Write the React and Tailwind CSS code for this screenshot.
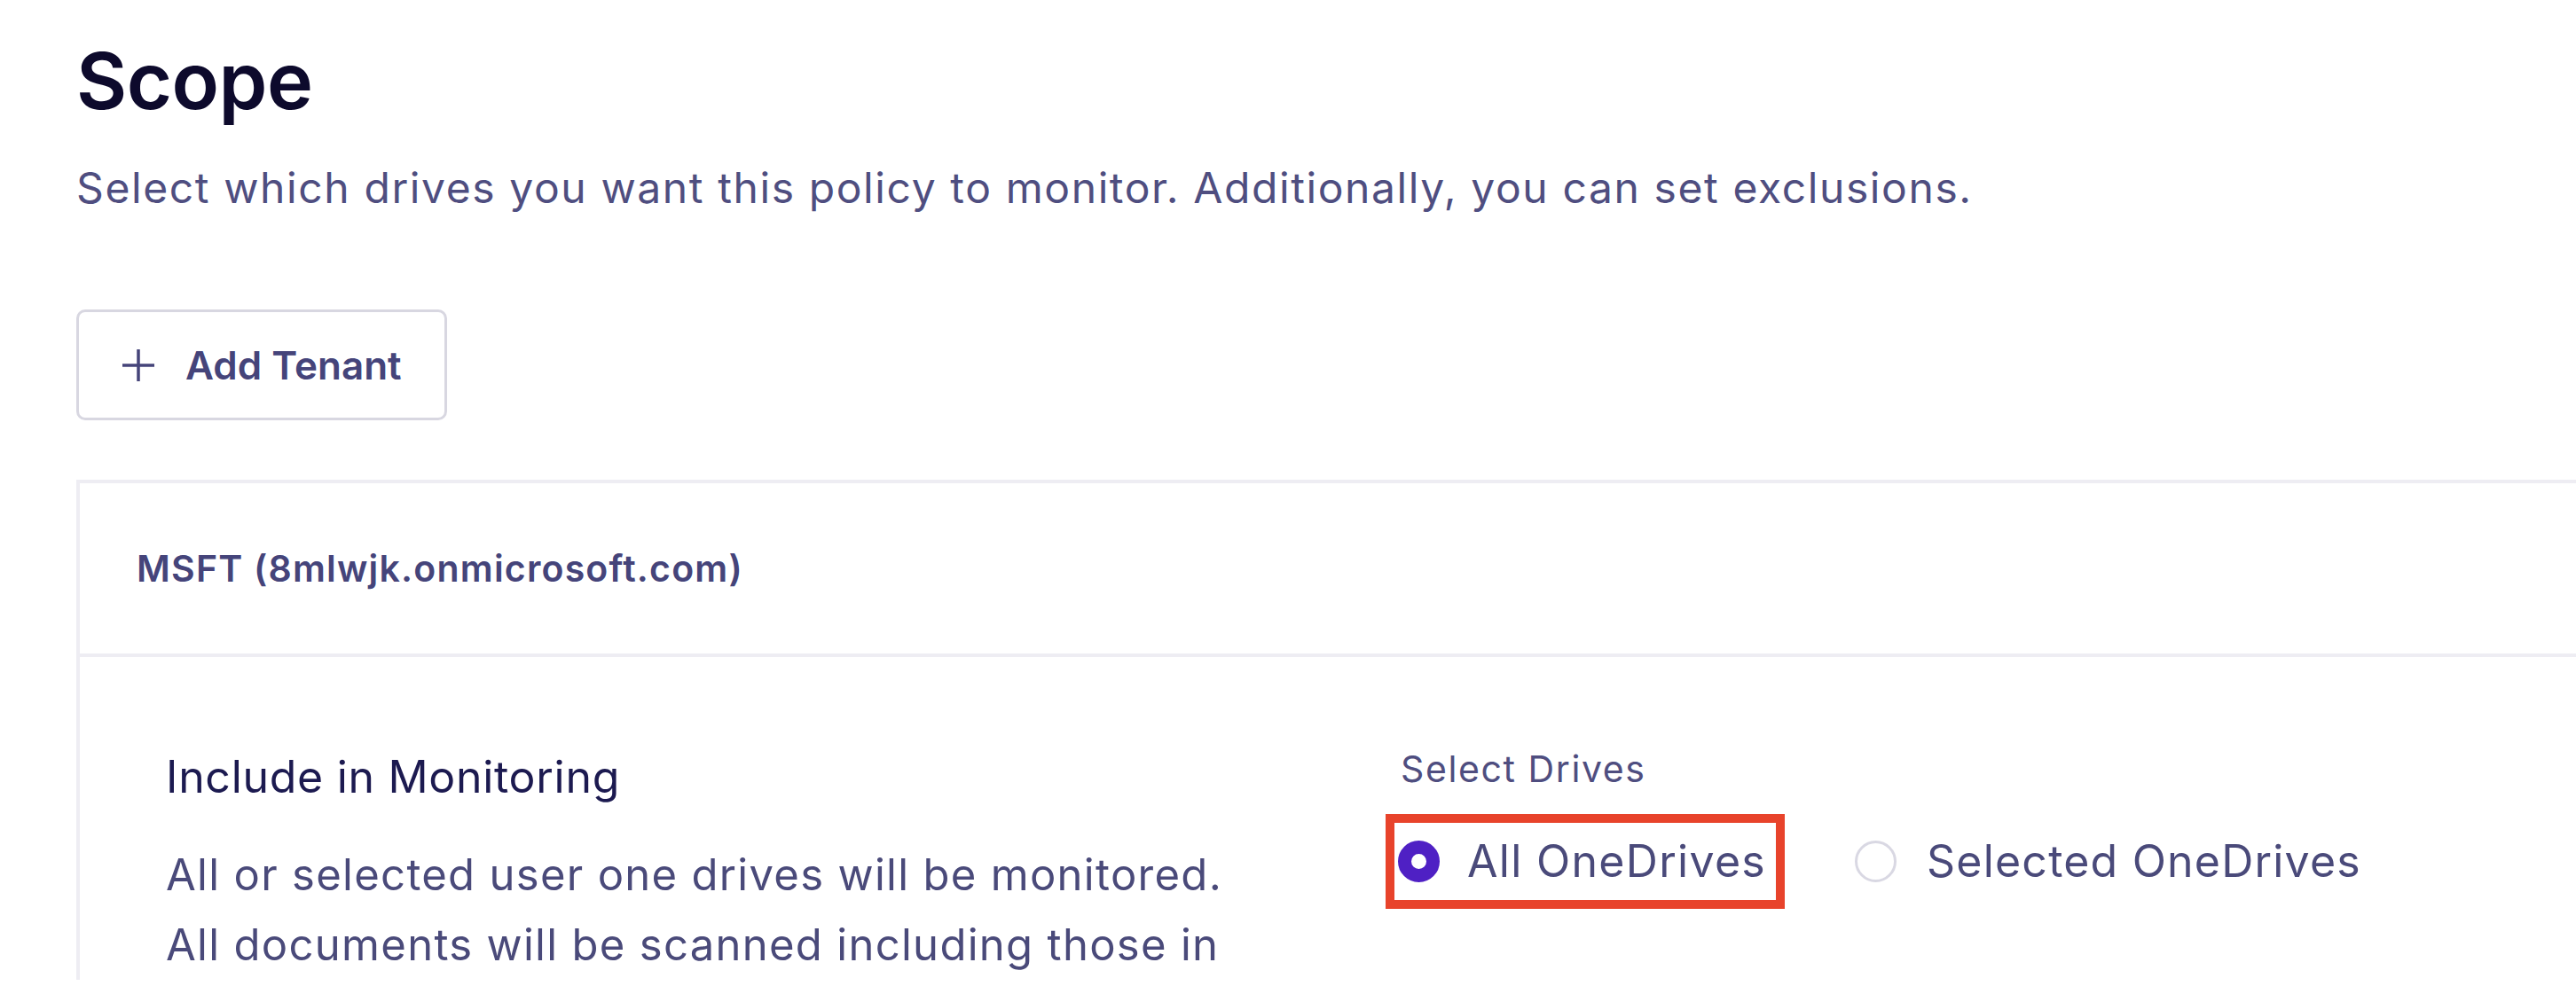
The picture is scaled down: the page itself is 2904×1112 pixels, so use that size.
import React from "react";

function Radio({ checked }) {
  if (checked) {
    return (
      <span className="box-border block h-[47px] w-[47px] shrink-0 rounded-full border-[15px] border-[#4f20c4] bg-white" />
    );
  }
  return (
    <span className="box-border block h-[47px] w-[47px] shrink-0 rounded-full border-[3px] border-[#d9d8e3] bg-white" />
  );
}

export default function App() {
  return (
    <div
      className="h-[1112px] w-full overflow-hidden bg-white pl-[86px] pt-[47px]"
      style={{ fontFamily: "Inter, 'Noto Sans', sans-serif" }}
    >
      <h1 className="text-[88px] font-semibold leading-[88px] tracking-[-0.5px] text-[#0d0a2c]">
        Scope
      </h1>
      <p className="mt-[47px] text-[48px] leading-[60px] tracking-[1.6px] text-[#4f4e80]">
        Select which drives you want this policy to monitor. Additionally, you can set exclusions.
      </p>

      <button className="mt-[107px] box-border flex h-[125px] w-[418px] items-center rounded-[10px] border-[3px] border-[#d8d7e1] bg-white pl-[48px]">
        <svg width="38" height="38" viewBox="0 0 38 38" className="shrink-0">
          <path d="M19 1V37M1 19H37" stroke="#45447a" strokeWidth="3.5" fill="none" />
        </svg>
        <span className="ml-[34px] text-[44px] font-semibold leading-[44px] text-[#45447a]">
          Add Tenant
        </span>
      </button>

      <div className="mt-[67px] border-l-[4px] border-t-[4px] border-[#eeedf3]">
        <div className="flex h-[192px] items-center pl-[64px]">
          <span className="text-[41px] font-semibold leading-[50px] tracking-[1.2px] text-[#45447a]">
            MSFT (8mlwjk.onmicrosoft.com)
          </span>
        </div>
        <div className="h-[4px] bg-[#eeedf3]" />
        <div className="flex items-start pl-[97px] pt-[96px]">
          <div className="w-[1392px] shrink-0 pt-[9px]">
            <div className="text-[50px] leading-[60px] tracking-[0.7px] text-[#1c1a50]">
              Include in Monitoring
            </div>
            <p className="mt-[41px] text-[49px] leading-[79px] tracking-[1.3px] text-[#4a4a7a]">
              All or selected user one drives will be monitored.
              <br />
              All documents will be scanned including those in
            </p>
          </div>
          <div className="flex flex-col">
            <div className="text-[41px] leading-[60px] tracking-[1.6px] text-[#4f4e80]">Select Drives</div>
            <div className="-ml-[3px] mt-[44px] flex h-[60px] items-center">
              <label className="relative flex items-center">
                <Radio checked />
                <span className="ml-[31px] text-[50px] leading-[60px] tracking-[1.3px] text-[#4a4a7a]">
                  All OneDrives
                </span>
                <span className="pointer-events-none absolute -bottom-[24px] -left-[14px] -right-[21px] -top-[23px] border-[10px] border-[#e8432b]" />
              </label>
              <label className="ml-[100px] flex items-center">
                <Radio checked={false} />
                <span className="ml-[34px] text-[50px] leading-[60px] tracking-[1.2px] text-[#4a4a7a]">
                  Selected OneDrives
                </span>
              </label>
            </div>
          </div>
        </div>
      </div>
    </div>
  );
}
